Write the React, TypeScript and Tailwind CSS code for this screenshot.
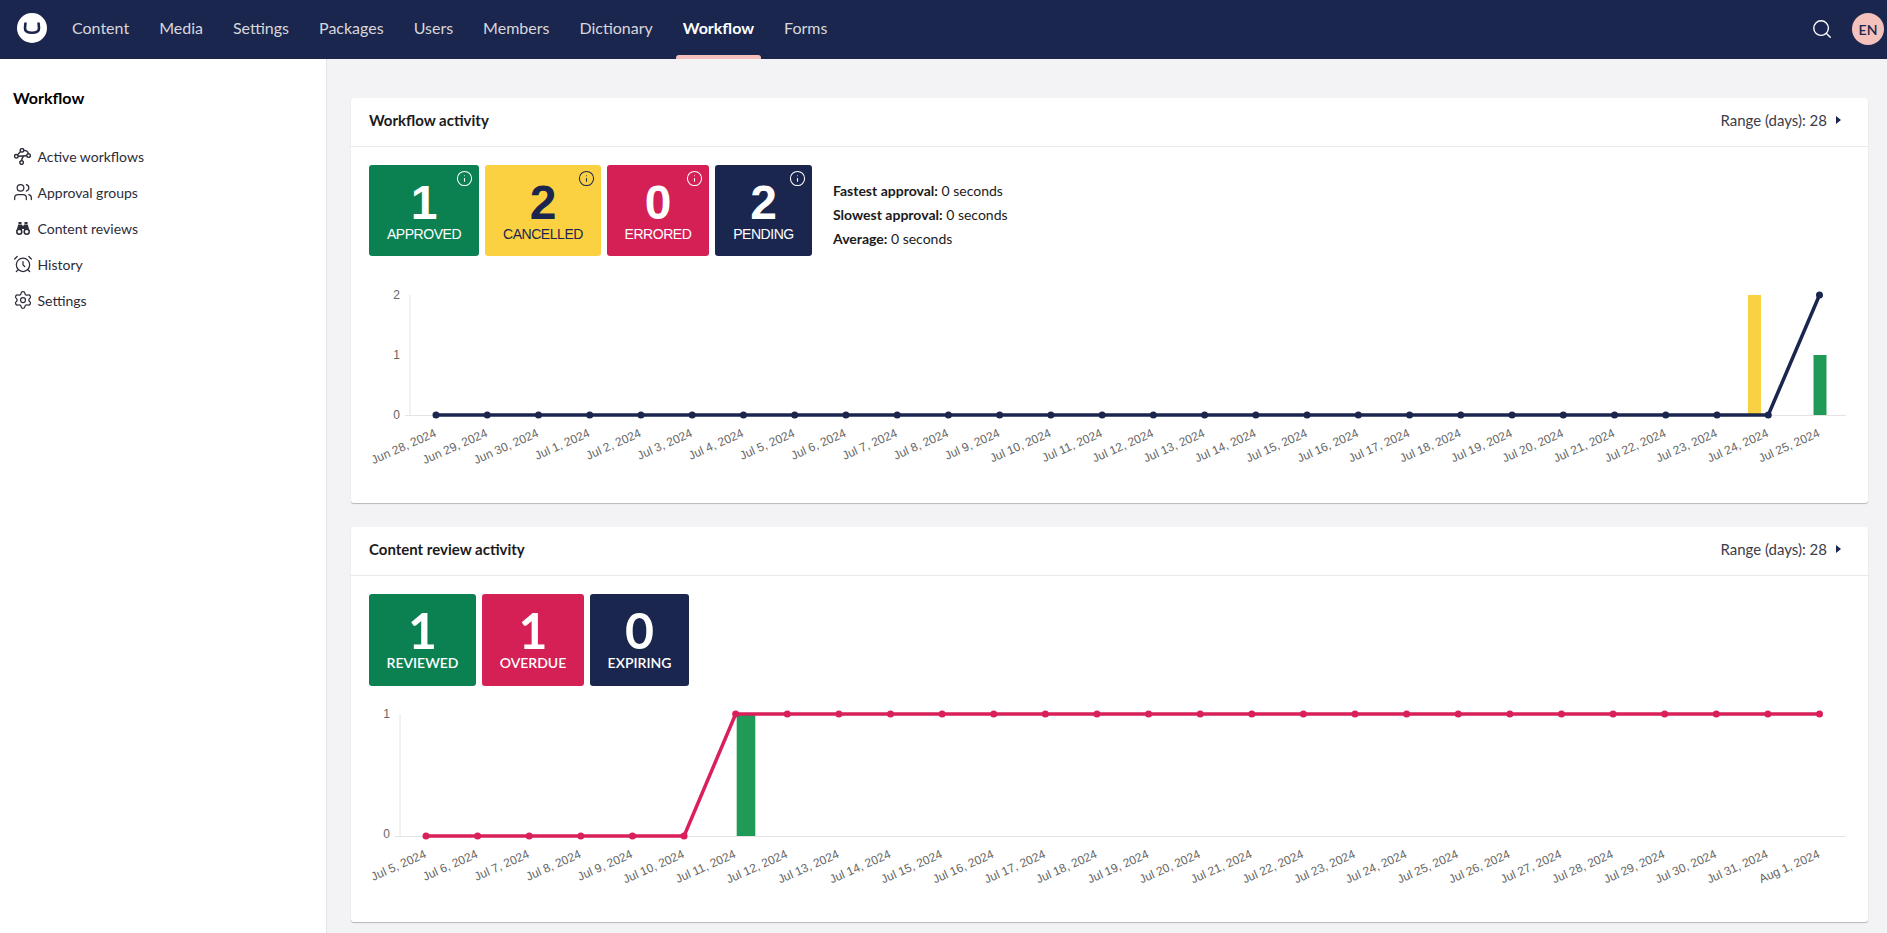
import React from 'react';
import { Users, AlarmClock, Settings, Search, Info } from 'lucide-react';

const NAV = ['Content', 'Media', 'Settings', 'Packages', 'Users', 'Members', 'Dictionary', 'Workflow', 'Forms'];

function NodesIcon() {
  return (
    <svg width="17" height="17" viewBox="0 0 17 17" fill="none" stroke="currentColor" strokeWidth="1.4">
      <circle cx="8" cy="2.3" r="1.8" />
      <circle cx="2.3" cy="8.3" r="1.8" />
      <circle cx="14.6" cy="7.6" r="1.8" />
      <circle cx="7.6" cy="14.6" r="1.8" />
      <path d="M4.1 8.200 12.800 7.700M9.800 2.400C12.500 2.400 14 3.500 14.400 5.800M3.500 6.900 6.600 3.500M10 8C8.500 9 7.800 10.500 7.700 12.800" />
    </svg>
  );
}

function BinocularsIcon() {
  return (
    <svg width="14" height="13" viewBox="0 0 14 13" fill="currentColor">
      <rect x="2.5" y="0" width="3" height="2" />
      <rect x="8.5" y="0" width="3" height="2" />
      <path d="M2.200 2.500H6V9H.5z" />
      <path d="M8 2.500h3.800L13.500 9H8z" />
      <rect x="6" y="3.500" width="2" height="3.500" />
      <circle cx="3.300" cy="9.700" r="2.500" fill="#fff" stroke="currentColor" strokeWidth="1.500" />
      <circle cx="10.700" cy="9.700" r="2.500" fill="#fff" stroke="currentColor" strokeWidth="1.500" />
    </svg>
  );
}

const SIDE = [
  { label: 'Active workflows', icon: <span className="ml-[1px]"><NodesIcon /></span> },
  { label: 'Approval groups', icon: <Users size={20} strokeWidth={1.5} /> },
  { label: 'Content reviews', icon: <span className="ml-[3px]"><BinocularsIcon /></span> },
  { label: 'History', icon: <AlarmClock size={20} strokeWidth={1.5} /> },
  { label: 'Settings', icon: <Settings size={20} strokeWidth={1.5} /> },
];

function dates(startMonth: string, startDay: number, monthDays: number, nextMonth: string, count: number) {
  const out: string[] = [];
  let m = startMonth;
  let d = startDay;
  for (let i = 0; i < count; i++) {
    out.push(`${m} ${d}, 2024`);
    d++;
    if (d > monthDays) {
      d = 1;
      m = nextMonth;
    }
  }
  return out;
}

type ChartProps = {
  height: number;
  axisX: number;
  top: number;
  bottom: number;
  firstX: number;
  lastX: number;
  ticks: { label: string; y: number }[];
  labels: string[];
  values: number[];
  maxValue: number;
  color: string;
  bars: { x: number; w: number; y: number; color: string }[];
};

// plain svg chart, coordinates are relative to the card body
function LineChart({ height, axisX, top, bottom, firstX, lastX, ticks, labels, values, maxValue, color, bars }: ChartProps) {
  const step = (lastX - firstX) / (labels.length - 1);
  const pts = values.map((v, i) => [firstX + i * step, bottom - (v / maxValue) * (bottom - top)]);
  return (
    <svg width="1517" height={height} className="block" style={{ fontFamily: '"Liberation Sans", Arial, sans-serif' }}>
      <line x1={axisX} y1={top} x2={axisX} y2={bottom} stroke="#e4e4e4" />
      <line x1={axisX - 5} y1={bottom + 0.5} x2={1495} y2={bottom + 0.5} stroke="#e4e4e4" />
      {ticks.map((t) => (
        <text key={t.label} x={axisX - 10} y={t.y + 4} textAnchor="end" fontSize="12" fill="#666">
          {t.label}
        </text>
      ))}
      {bars.map((b, i) => (
        <rect key={i} x={b.x} y={b.y} width={b.w} height={bottom - b.y} fill={b.color} />
      ))}
      <polyline points={pts.map((p) => p.join(',')).join(' ')} fill="none" stroke={color} strokeWidth="3.5" />
      {pts.map((p, i) => (
        <circle key={i} cx={p[0]} cy={p[1]} r="3.5" fill={color} />
      ))}
      {labels.map((l, i) => (
        <text
          key={l}
          x={firstX + i * step + 1}
          y={bottom + 21}
          textAnchor="end"
          fontSize="12"
          fill="#666"
          transform={`rotate(-24 ${firstX + i * step + 1} ${bottom + 21})`}
        >
          {l}
        </text>
      ))}
    </svg>
  );
}

function CardHeader({ title }: { title: string }) {
  return (
    <div className="h-[49px] border-b border-[#e9e9eb] pl-[18px] pr-[27px] pb-[4px] flex items-center justify-between">
      <span className="text-[15px] font-bold text-[#1b1b1b]">{title}</span>
      <div className="flex items-center gap-[9px] text-[15px] text-[#3d3d4a]">
        <span>Range (days): 28</span>
        <span className="w-0 h-0 border-y-[4px] border-y-transparent border-l-[5px] border-l-[#1b264f]" />
      </div>
    </div>
  );
}

function Tile({ n, label, bg, dark, w }: { n: number; label: string; bg: string; dark?: boolean; w: string }) {
  return (
    <div
      className={`${w} ${bg} relative h-[91px] rounded-[3px] flex flex-col items-center pt-[14px] ${dark ? 'text-[#1b264f]' : 'text-white'}`}
      style={{ fontFamily: '"Liberation Sans", Arial, sans-serif' }}
    >
      <Info size={17} strokeWidth={1.5} className="absolute top-[5px] right-[6px]" />
      <span className="text-[48px] font-bold leading-[47px]">{n}</span>
      <span className="text-[14px] tracking-[-0.45px] leading-[16px] uppercase">{label}</span>
    </div>
  );
}

function ReviewTile({ n, label, bg, w }: { n: number; label: string; bg: string; w: string }) {
  return (
    <div className={`${w} ${bg} h-[92px] rounded-[3px] flex flex-col items-center pt-[12px] text-white`}>
      <span className="text-[50px] font-bold leading-[48px]">{n}</span>
      <span className="text-[14px] font-semibold leading-[18px] uppercase">{label}</span>
    </div>
  );
}

export default function App() {
  return (
    <div className="h-screen overflow-hidden flex flex-col bg-[#f3f3f5] font-['Lato',sans-serif] text-[#1b1b1b]">
      {/* Top bar */}
      <header className="h-[59px] shrink-0 bg-[#1b264f] flex items-center justify-between">
        <div className="flex items-center h-full">
          <div className="ml-[17px] mr-[10px] mb-[3px] w-[30px] h-[30px] rounded-full bg-white flex items-center justify-center">
            <svg width="20" height="16" viewBox="0 0 20 16" fill="none">
              <path d="M3.500 2.500 3 8c-.2 3.500 2.500 4.800 7 4.800s7.200-1.300 7-4.800l-.5-5.500" stroke="#1b264f" strokeWidth="2.600" />
            </svg>
          </div>
          {NAV.map((n) => (
            <div
              key={n}
              className={`relative h-full flex items-center px-[15px] pb-[3px] text-[16px] ${n === 'Workflow' ? 'font-bold text-white' : 'text-[#d8d7d9]'}`}
            >
              {n}
              {n === 'Workflow' && <span className="absolute bottom-0 left-[8px] right-[8px] h-1 rounded-t-[3px] bg-[#f5c1bc]" />}
            </div>
          ))}
        </div>
        <div className="flex items-center gap-[19px] mr-[3px] mb-[1px]">
          <Search size={22} strokeWidth={1.5} className="text-white" />
          <div className="w-8 h-8 rounded-full bg-[#f5c1bc] flex items-center justify-center text-[14px] font-semibold text-[#1b264f]">EN</div>
        </div>
      </header>

      <div className="flex flex-1 min-h-0">
        {/* Sidebar */}
        <aside className="w-[327px] shrink-0 bg-white border-r border-[#e3e3e5] pl-[13px] pt-[29px]">
          <h2 className="text-[16px] font-bold leading-5 mb-[30px] text-black">Workflow</h2>
          <ul>
            {SIDE.map((s) => (
              <li key={s.label} className="h-9 flex items-center text-[14px] text-[#2c2c3a]">
                <span className="w-[24.5px] flex justify-start">{s.icon}</span>
                {s.label}
              </li>
            ))}
          </ul>
        </aside>

        {/* Main */}
        <main className="flex-1 min-w-0 pl-[24px] pr-[19px] pt-[39px] flex flex-col gap-[24px]">
          <section className="h-[405px] bg-white rounded-[3px] shadow-[0_1px_1px_rgba(0,0,0,0.25)]">
            <CardHeader title="Workflow activity" />
            <div className="flex gap-[6px] px-[18px] pt-[18px]">
              <Tile n={1} label="Approved" bg="bg-[#0b8152]" w="w-[110px]" />
              <Tile n={2} label="Cancelled" bg="bg-[#fbd142]" dark w="w-[116px]" />
              <Tile n={0} label="Errored" bg="bg-[#d42054]" w="w-[102px]" />
              <Tile n={2} label="Pending" bg="bg-[#1b264f]" w="w-[97px]" />
              <div className="ml-[15px] pt-[14px] text-[14px] leading-[24px] text-[#1b1b1b]">
                <div><b>Fastest approval:</b> 0 seconds</div>
                <div><b>Slowest approval:</b> 0 seconds</div>
                <div><b>Average:</b> 0 seconds</div>
              </div>
            </div>
            <div className="mt-[29px]">
              <LineChart
                height={190}
                axisX={59}
                top={10}
                bottom={130}
                firstX={85}
                lastX={1468.5}
                ticks={[
                  { label: '2', y: 10 },
                  { label: '1', y: 70 },
                  { label: '0', y: 130 },
                ]}
                labels={dates('Jun', 28, 30, 'Jul', 28)}
                values={[...Array(27).fill(0), 2]}
                maxValue={2}
                color="#1b264f"
                bars={[
                  { x: 1397, w: 13, y: 10, color: '#fad142' },
                  { x: 1462.5, w: 13, y: 70, color: '#1f9a57' },
                ]}
              />
            </div>
          </section>

          <section className="h-[395px] bg-white rounded-[3px] shadow-[0_1px_1px_rgba(0,0,0,0.25)]">
            <CardHeader title="Content review activity" />
            <div className="flex gap-[6px] px-[18px] pt-[18px]">
              <ReviewTile n={1} label="Reviewed" bg="bg-[#0b8152]" w="w-[107px]" />
              <ReviewTile n={1} label="Overdue" bg="bg-[#d42054]" w="w-[102px]" />
              <ReviewTile n={0} label="Expiring" bg="bg-[#1b264f]" w="w-[99px]" />
            </div>
            <div className="mt-[18px]">
              <LineChart
                height={200}
                axisX={49}
                top={10}
                bottom={132}
                firstX={75}
                lastX={1468.5}
                ticks={[
                  { label: '1', y: 10 },
                  { label: '0', y: 130 },
                ]}
                labels={dates('Jul', 5, 31, 'Aug', 28)}
                values={[0, 0, 0, 0, 0, 0, ...Array(22).fill(1)]}
                maxValue={1}
                color="#d9205a"
                bars={[{ x: 385.7, w: 18.6, y: 10, color: '#1f9a57' }]}
              />
            </div>
          </section>
        </main>
      </div>
    </div>
  );
}
